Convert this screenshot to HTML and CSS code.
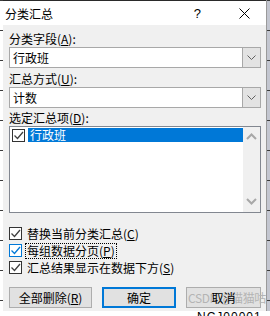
FILE: index.html
```html
<!DOCTYPE html>
<html lang="zh-CN">
<head>
  <meta charset="UTF-8">
  <title>分类汇总</title>
  <link rel="stylesheet" href="styles.css">
</head>
<body>
  <div class="screen">
    <div class="gutter"></div>
    <div class="dialog">
      <div class="titlebar">
        <span class="title">分类汇总</span>
        <span class="help">?</span>
        <span class="close">
          <svg width="11" height="11" viewBox="0 0 11 11"><path d="M0.5 0.5L10.5 10.5M10.5 0.5L0.5 10.5" stroke="#000" stroke-width="1" fill="none"/></svg>
        </span>
      </div>

      <div class="content">
        <div class="field-label">分类字段(<u>A</u>):</div>
        <div class="combo">
          <span class="combo-value">行政班</span>
          <span class="combo-btn">
            <svg width="9" height="5" viewBox="0 0 9 5"><path d="M0.5 0.5L4.5 4.5L8.5 0.5" stroke="#606060" fill="none"/></svg>
          </span>
        </div>

        <div class="field-label second">汇总方式(<u>U</u>):</div>
        <div class="combo">
          <span class="combo-value">计数</span>
          <span class="combo-btn">
            <svg width="9" height="5" viewBox="0 0 9 5"><path d="M0.5 0.5L4.5 4.5L8.5 0.5" stroke="#606060" fill="none"/></svg>
          </span>
        </div>

        <div class="field-label third">选定汇总项(<u>D</u>):</div>
        <div class="listbox">
          <div class="list-items">
            <div class="list-item">
              <span class="check">
                <svg width="11" height="11" viewBox="0 0 11 11"><path d="M1.5 5.5L4.5 8.5L10 2" stroke="#404040" stroke-width="1.3" fill="none"/></svg>
              </span>
              <span class="item-text">行政班</span>
            </div>
          </div>
          <div class="scrollbar">
            <svg width="11" height="7" viewBox="0 0 11 7"><path d="M1 6L5.5 1.5L10 6" stroke="#a8a8a8" stroke-width="2" fill="none"/></svg>
            <svg width="11" height="7" viewBox="0 0 11 7"><path d="M1 1L5.5 5.5L10 1" stroke="#a8a8a8" stroke-width="2" fill="none"/></svg>
          </div>
        </div>

        <div class="options">
          <div class="option">
            <span class="check">
              <svg width="11" height="11" viewBox="0 0 11 11"><path d="M1.5 5.5L4.5 8.5L10 2" stroke="#404040" stroke-width="1.3" fill="none"/></svg>
            </span>
            <span class="option-text">替换当前分类汇总(<u>C</u>)</span>
          </div>
          <div class="option">
            <span class="check focus">
              <svg width="11" height="11" viewBox="0 0 11 11"><path d="M1.5 5.5L4.5 8.5L10 2" stroke="#0078d7" stroke-width="1.3" fill="none"/></svg>
            </span>
            <span class="option-text focused">每组数据分页(<u>P</u>)</span>
          </div>
          <div class="option">
            <span class="check">
              <svg width="11" height="11" viewBox="0 0 11 11"><path d="M1.5 5.5L4.5 8.5L10 2" stroke="#404040" stroke-width="1.3" fill="none"/></svg>
            </span>
            <span class="option-text">汇总结果显示在数据下方(<u>S</u>)</span>
          </div>
        </div>

        <div class="buttons">
          <button class="btn remove">全部删除(<u>R</u>)</button>
          <button class="btn ok">确定</button>
          <button class="btn cancel"><span class="watermark">CSDN @猫猫咕</span><span class="btn-label">取消</span></button>
        </div>
      </div>
    </div>
    <div class="gutter-right"></div>
  </div>
  <div class="under">NCJ00001 01</div>
</body>
</html>
```

FILE: styles.css
```css
html, body {
  margin: 0;
  padding: 0;
}
body {
  width: 270px;
  height: 316px;
  overflow: hidden;
  background: #fff;
  font-family: "Noto Sans CJK SC", "Liberation Sans", sans-serif;
  font-size: 12px;
  color: #000;
}
u {
  text-decoration: underline;
  text-underline-offset: 1px;
}
.screen {
  display: flex;
  height: 311px;
  background-image: linear-gradient(to bottom, #3c3c3c 0 1px, transparent 1px);
  background-size: 100% 30px;
}
.gutter {
  width: 3px;
}
.gutter-right {
  width: 3px;
  background-color: #c3c6d0;
  background-image: linear-gradient(to bottom, #3c3c3c 0 1px, transparent 1px);
  background-size: 100% 30px;
}
.dialog {
  width: 263px;
  height: 311px;
  background: #f0f0f0;
  border-right: 1px solid #9a9a9a;
  display: flex;
  flex-direction: column;
}
.titlebar {
  height: 24px;
  background: #fff;
  border-top: 1px solid #2a2a2a;
  display: flex;
  align-items: center;
  font-size: 12px;
}
.title {
  padding-left: 2px;
  flex: 1;
}
.help {
  font-family: "Liberation Sans", sans-serif;
  font-size: 13px;
  margin-right: 38px;
}
.close {
  display: flex;
  margin-right: 16px;
}
.content {
  padding: 7px 5px 0 6px;
}
.field-label {
  line-height: 14px;
  height: 14px;
}
.field-label.second {
  margin-top: 4px;
}
.field-label.third {
  margin-top: 3px;
}
.combo {
  margin-top: 1px;
  height: 21px;
  box-sizing: border-box;
  border: 1px solid #a8a8a8;
  background: #fff;
  display: flex;
}
.combo-value {
  flex: 1;
  padding-left: 3px;
  line-height: 19px;
}
.combo-btn {
  width: 17px;
  background: #e3e3e3;
  border-left: 1px solid #a8a8a8;
  display: flex;
  align-items: center;
  justify-content: center;
}
.listbox {
  margin-top: 1px;
  height: 87px;
  box-sizing: border-box;
  border: 1px solid #828790;
  background: #fff;
  display: flex;
}
.list-items {
  flex: 1;
  padding-top: 1px;
}
.list-item {
  display: flex;
  align-items: center;
  height: 14px;
}
.list-item .check {
  margin-left: 2px;
  margin-right: 3px;
}
.item-text {
  flex: 1;
  background: #0078d7;
  color: #fff;
  line-height: 14px;
  padding-left: 2px;
}
.scrollbar {
  width: 17px;
  background: #f0f0f0;
  display: flex;
  flex-direction: column;
  align-items: center;
  justify-content: space-between;
  padding: 6px 0 7px;
  box-sizing: border-box;
}
.check {
  width: 13px;
  height: 13px;
  box-sizing: border-box;
  border: 1px solid #333;
  background: #fff;
  display: flex;
  align-items: center;
  justify-content: center;
  flex-shrink: 0;
}
.check.focus {
  border-color: #0078d7;
}
.options {
  margin-top: 12px;
}
.option {
  display: flex;
  align-items: center;
  height: 17px;
}
.option .check {
  margin-right: 3px;
}
.option-text {
  line-height: 14px;
  padding: 0 1px;
  border: 1px dotted transparent;
}
.option-text.focused {
  border-color: #000;
}
.buttons {
  display: flex;
  gap: 10px;
  margin-top: 11px;
}
.btn {
  height: 21px;
  box-sizing: border-box;
  background: #e1e1e1;
  border: 1px solid #adadad;
  font-family: inherit;
  font-size: 12px;
  color: #000;
  padding: 0;
  position: relative;
}
.btn.remove {
  width: 83px;
}
.btn.ok {
  width: 74px;
  border: 2px solid #0078d7;
}
.btn.cancel {
  width: 75px;
}
.btn-label {
  position: relative;
}
.watermark {
  position: absolute;
  left: 1px;
  top: 2px;
  font-size: 12px;
  line-height: 16px;
  color: #b4b4b4;
  white-space: nowrap;
  letter-spacing: -0.4px;
}
.under {
  height: 5px;
  overflow: hidden;
  padding-left: 197px;
  font-family: "Liberation Sans", sans-serif;
  font-size: 12px;
  line-height: 12px;
  color: #000;
  letter-spacing: 1px;
}
```
